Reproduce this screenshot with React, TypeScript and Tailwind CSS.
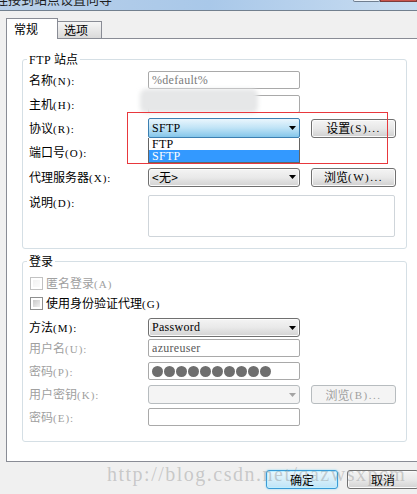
import React from 'react';
import clsx from 'clsx';

const ser = "font-['Liberation_Serif','Noto_Sans_CJK_SC',serif]";

type LblProps = { cn: string; k: string; colon?: boolean; dots?: boolean };

// CJK text + half-width ascii part, like the SimSun labels
const Lbl = ({ cn, k, colon = true, dots }: LblProps) => (
  <>
    {cn}
    <span className={clsx(ser, 'text-[11px] tracking-[1px]')}>
      ({k}){colon ? ':' : ''}
      {dots ? '...' : ''}
    </span>
  </>
);

const Arrow = ({ gray }: { gray?: boolean }) => (
  <svg width="7" height="4" viewBox="0 0 7 4" className="mr-[3px] shrink-0">
    <polygon points="0,0 7,0 3.5,4" fill={gray ? '#a3a3a3' : '#000'} />
  </svg>
);

type RowProps = {
  label: React.ReactNode;
  gray?: boolean;
  className?: string;
  children?: React.ReactNode;
};

const Row = ({ label, gray, className, children }: RowProps) => (
  <div className={clsx('ml-[2px] flex', className ?? 'items-center')}>
    <div className={clsx('w-[119px] shrink-0 text-[12px] leading-[14px]', gray ? 'text-[#a0a0a0]' : 'text-black')}>
      {label}
    </div>
    {children}
  </div>
);

const Input = ({ text, color = 'text-[#6d6d6d]' }: { text?: string; color?: string }) => (
  <div
    className={clsx(
      'flex h-[18px] w-[152px] items-center rounded-[2px] border border-[#a9a9a9] bg-white pl-[3px] text-[12px] leading-[13px] tracking-[0.3px]',
      ser,
      color
    )}
  >
    {text}
  </div>
);

const Select = ({ text, disabled }: { text?: React.ReactNode; disabled?: boolean }) => (
  <div
    className={clsx(
      'flex h-[19px] w-[152px] items-center justify-between rounded-[3px] border pl-[3px] text-[12px] leading-[13px] tracking-[0.3px]',
      ser,
      disabled
        ? 'border-[#b7bcbf] bg-[#f4f4f4]'
        : 'border-[#707070] bg-linear-to-b from-[#f4f4f4] via-[#e9e9e9] to-[#d2d2d2] shadow-[inset_0_0_0_1px_#fcfcfc]'
    )}
  >
    <span>{text}</span>
    <Arrow gray={disabled} />
  </div>
);

const Btn = ({ children, disabled }: { children: React.ReactNode; disabled?: boolean }) => (
  <div
    className={clsx(
      'ml-[11px] flex h-[19px] w-[85px] items-center justify-center rounded-[3px] border text-[12px] leading-[14px]',
      disabled
        ? 'border-[#b7bcbf] bg-[#f4f4f4] text-[#a0a0a0]'
        : 'border-[#707070] bg-linear-to-b from-[#f4f4f4] via-[#e8e8e8] to-[#d0d0d0] text-black shadow-[inset_0_0_0_1px_#fbfbfb]'
    )}
  >
    {children}
  </div>
);

const Check = ({ disabled }: { disabled?: boolean }) => (
  <div
    className={clsx(
      'h-[13px] w-[13px] shrink-0 border bg-white p-[2px]',
      disabled ? 'border-[#c2c2c2]' : 'border-[#8e8f8f]'
    )}
  >
    <div
      className={clsx(
        'h-full w-full bg-linear-to-br',
        disabled ? 'from-[#f2f2f2] to-[#fbfbfb]' : 'from-[#c9c9c9] to-[#f0f0f0]'
      )}
    />
  </div>
);

export default function App() {
  return (
    <div className="relative h-[494px] w-[417px] overflow-hidden bg-[#f0f0f0] font-['Noto_Sans_CJK_SC',sans-serif] text-[12px] text-black">
      {/* title bar, mostly cut off */}
      <div className="flex h-[11px] items-start justify-between overflow-hidden border-b border-[#72808f] bg-linear-to-r from-[#b9d0e9] via-[#a9c8e9] to-[#c9ddf1]">
        <span className="-ml-[5px] -mt-[9px] text-[13px] leading-[16px] text-[#1e1e1e]">连接到站点设置向导</span>
        <div className="flex h-[2px]">
          <div className="w-[27px] rounded-b-[3px] border border-t-0 border-[#6f7e90] bg-[#eef3f9]" />
          <div className="w-[37px] border border-t-0 border-[#7d3c3c] bg-[#c9554d]" />
        </div>
      </div>

      {/* tabs */}
      <div className="flex items-end pl-[6px] pt-[7px]">
        <div className="relative z-10 -mb-px h-[21px] w-[52px] border border-b-0 border-[#898c95] bg-white pl-[7px] pt-[2px] text-[12px] leading-[16px]">
          常规
        </div>
        <div className="-ml-px h-[17px] w-[45px] border border-b-0 border-[#898c95] bg-linear-to-b from-[#f6f6f6] to-[#dadada] pl-[6px] text-[12px] leading-[16px]">
          选项
        </div>
      </div>

      {/* panel */}
      <div className="ml-[6px] flex h-[424px] w-[420px] flex-col border border-[#898c95] bg-white">
        {/* FTP site */}
        <fieldset className="ml-[15px] mt-[13px] w-[385px] rounded-[3px] border border-[#d5dfe5] pb-[11px] pl-[4px] pt-[4px]">
          <legend className="px-[2px] text-[12px] leading-[14px]">
            <span className={clsx(ser, 'text-[12px] tracking-[0.5px]')}>FTP</span> 站点
          </legend>

          <Row label={<Lbl cn="名称" k="N" />} className="h-[18px] items-center">
            <Input text="%default%" color="text-[#7b7b7b]" />
          </Row>

          <Row label={<Lbl cn="主机" k="H" />} className="mt-[6px] h-[18px] items-center">
            <div className="relative">
              <Input />
              <div className="absolute -left-[8px] -top-[6px] h-[24px] w-[118px] rounded-[6px] bg-[#e6e7e8] blur-[2px]" />
            </div>
          </Row>

          <Row label={<Lbl cn="协议" k="R" />} className="relative z-20 mt-[5px] h-[20px] items-center">
            <div className="relative">
              <div
                className={clsx(
                  'flex h-[20px] w-[152px] items-center justify-between rounded-[2px] border border-[#3c7fb1] bg-linear-to-b from-[#eaf6fd] via-[#bfe3f6] to-[#84c6ea] pl-[3px] text-[12px] leading-[13px] tracking-[0.3px]',
                  ser
                )}
              >
                <span>SFTP</span>
                <Arrow />
              </div>
              {/* open dropdown list */}
              <div
                className={clsx(
                  'absolute left-0 top-full w-[152px] border border-t-0 border-[#646464] bg-white text-[12px] leading-[12px] tracking-[0.3px]',
                  ser
                )}
              >
                <div className="h-[12px] pl-[3px]">FTP</div>
                <div className="h-[12px] bg-[#3399ff] pl-[3px] text-white">SFTP</div>
              </div>
            </div>
            <Btn>
              设置<span className={clsx(ser, 'text-[11px] tracking-[1.5px]')}>(S)...</span>
            </Btn>
          </Row>

          <Row label={<Lbl cn="端口号" k="O" />} className="mt-[5px] h-[18px] items-center">
            <Input text="22" />
          </Row>

          <Row label={<Lbl cn="代理服务器" k="X" />} className="mt-[6px] h-[20px] items-center">
            <Select text={<span className="font-['Noto_Sans_CJK_SC',sans-serif] text-[12px]">&lt;无&gt;</span>} />
            <Btn>
              浏览<span className={clsx(ser, 'text-[11px] tracking-[1.5px]')}>(W)...</span>
            </Btn>
          </Row>

          <Row label={<Lbl cn="说明" k="D" />} className="mt-[8px] items-start">
            <div className="h-[42px] w-[247px] rounded-[2px] border border-[#cfd5da] bg-white" />
          </Row>
        </fieldset>

        {/* login */}
        <fieldset className="ml-[15px] mt-[5px] w-[385px] rounded-[3px] border border-[#d5dfe5] pb-[15px] pl-[4px]">
          <legend className="px-[2px] text-[12px] leading-[14px]">登录</legend>

          <div className="ml-[3px] mt-[9px] flex h-[13px] items-center text-[#a0a0a0]">
            <Check disabled />
            <span className="ml-[3px] text-[12px] leading-[14px]">
              <Lbl cn="匿名登录" k="A" colon={false} />
            </span>
          </div>
          <div className="ml-[3px] mt-[7px] flex h-[13px] items-center">
            <Check />
            <span className="ml-[3px] text-[12px] leading-[14px]">
              <Lbl cn="使用身份验证代理" k="G" colon={false} />
            </span>
          </div>

          <Row label={<Lbl cn="方法" k="M" />} className="mt-[8px] h-[19px] items-center">
            <Select text="Password" />
          </Row>

          <Row label={<Lbl cn="用户名" k="U" />} gray className="mt-[2px] h-[18px] items-center">
            <Input text="azureuser" color="text-[#5a5a5a]" />
          </Row>

          <Row label={<Lbl cn="密码" k="P" />} gray className="mt-[5px] h-[18px] items-center">
            <div className="flex h-[18px] w-[152px] items-center gap-[1px] rounded-[2px] border border-[#a9a9a9] bg-white pl-[3px]">
              {Array.from({ length: 10 }).map((_, i) => (
                <span key={i} className="h-[11px] w-[11px] rounded-full bg-[#6e6e6e]" />
              ))}
            </div>
          </Row>

          <Row label={<Lbl cn="用户密钥" k="K" />} gray className="mt-[5px] h-[19px] items-center">
            <Select disabled />
            <Btn disabled>
              浏览<span className={clsx(ser, 'text-[11px] tracking-[1.5px]')}>(B)...</span>
            </Btn>
          </Row>

          <Row label={<Lbl cn="密码" k="E" />} gray className="mt-[4px] h-[18px] items-center">
            <Input />
          </Row>
        </fieldset>
      </div>

      {/* dialog buttons */}
      <div className="-mr-[2px] mt-[8px] flex justify-end gap-[9px]">
        <div className="flex h-[19px] w-[72px] items-center justify-center rounded-[3px] border border-[#3a9bd6] bg-linear-to-b from-[#ebf7fd] via-[#d6effa] to-[#bfe4f7] text-[12px] leading-[14px] shadow-[inset_0_0_0_1px_#bfefff,0_0_2px_#7fd4f5]">
          确定
        </div>
        <div className="flex h-[19px] w-[72px] items-center justify-center rounded-[3px] border border-[#707070] bg-linear-to-b from-[#f4f4f4] via-[#e9e9e9] to-[#d2d2d2] text-[12px] leading-[14px] shadow-[inset_0_0_0_1px_#fbfbfb]">
          取消
        </div>
      </div>

      {/* annotation box */}
      <div className="pointer-events-none absolute left-[127px] top-[112px] z-30 h-[52px] w-[261px] border border-[#e8383d]" />

      {/* watermark */}
      <div className="pointer-events-none absolute left-[107px] top-[462px] z-30 font-['Liberation_Serif',serif] text-[20px] leading-[24px] tracking-[1.5px] text-[#8a8a8a]/40">
        http://blog.csdn.net/qazwsxpcm
      </div>
    </div>
  );
}
